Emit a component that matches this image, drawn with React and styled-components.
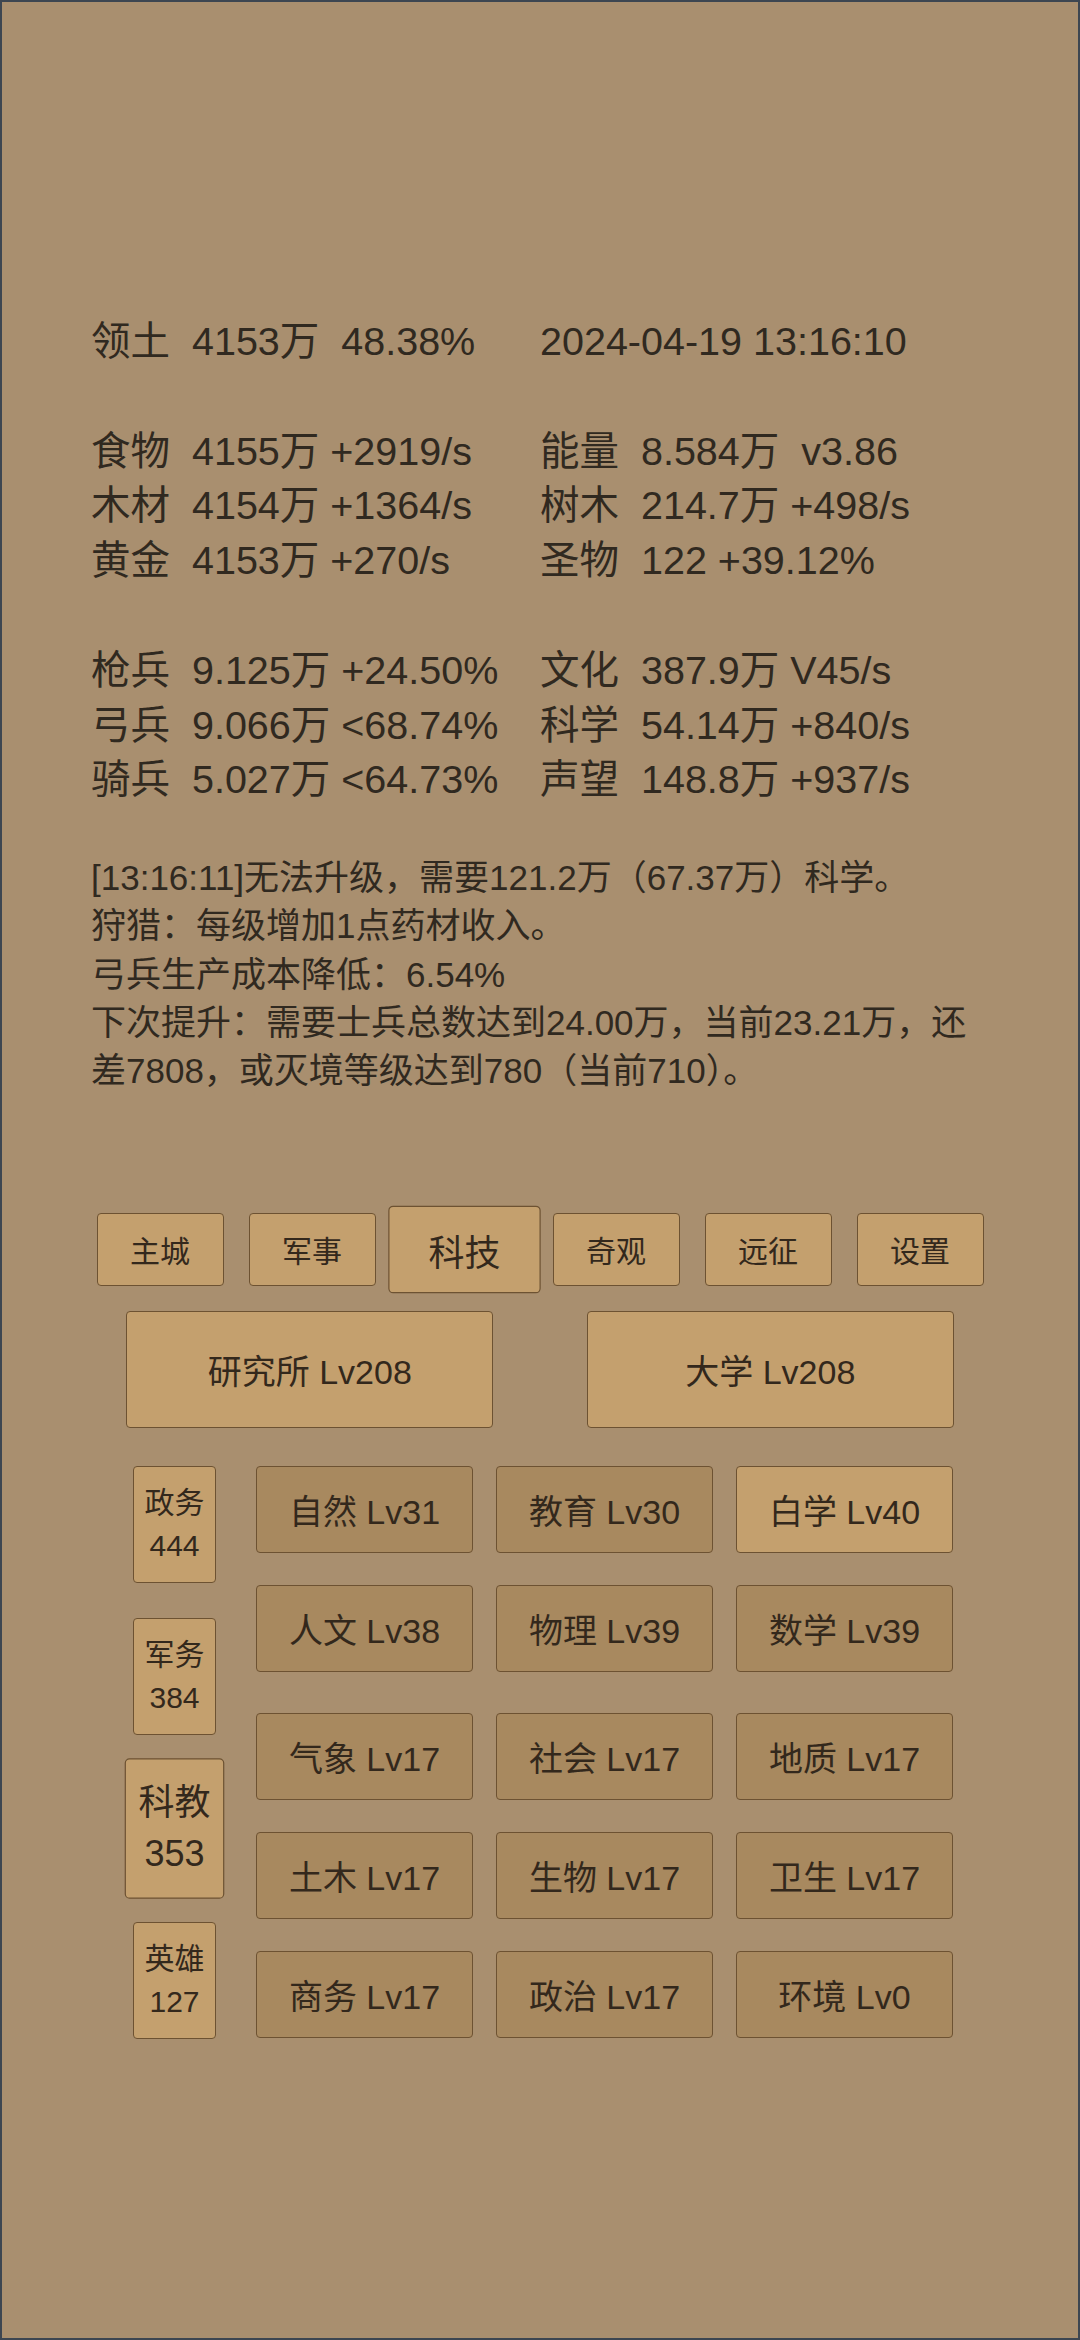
import { Fragment } from "react";
import styled, { createGlobalStyle } from "styled-components";

const GlobalStyle = createGlobalStyle`
  html, body {
    margin: 0;
    padding: 0;
    background: #3d4651;
  }
  * {
    box-sizing: border-box;
  }
`;

const font = `"Liberation Sans", "Noto Sans CJK SC", sans-serif`;

const Page = styled.div`
  width: 1080px;
  height: 2340px;
  border: 2px solid #3d4651;
  background: #a98f6f;
  padding-top: 312px;
  font-family: ${font};
  color: #302920;
  overflow: hidden;
`;

const Stats = styled.div`
  padding: 0 89px;
  display: grid;
  grid-template-columns: 449px 1fr;
  font-size: 39.5px;
  line-height: 54.8px;
`;

const Cell = styled.div`
  white-space: pre;
  margin-top: ${(p) => (p.$gap ? "54.8px" : "0")};
`;

const Log = styled.div`
  margin-top: 47px;
  padding: 0 89px;
  font-size: 35px;
  line-height: 48.3px;
`;

const Tabs = styled.div`
  margin-top: 117px;
  display: flex;
  justify-content: center;
  gap: 25px;
`;

const Btn = styled.div`
  display: flex;
  align-items: center;
  justify-content: center;
  text-align: center;
  background: ${(p) => (p.$dark ? "#a8895f" : "#c4a06e")};
  border: 1.5px solid #6d5232;
  border-radius: 4px;
  color: #33281c;
  transform: ${(p) => (p.$active ? "scale(1.2)" : "none")};
`;

const TabBtn = styled(Btn)`
  width: 127px;
  height: 73px;
  font-size: 30px;
`;

const Buildings = styled.div`
  margin-top: 25px;
  display: flex;
  justify-content: center;
  gap: 93.5px;
`;

const BigBtn = styled(Btn)`
  width: 367px;
  height: 117px;
  font-size: 34px;
`;

const TechArea = styled.div`
  margin-top: 38.7px;
  padding-left: 131px;
  display: flex;
  gap: 40px;
`;

const SideCol = styled.div`
  display: flex;
  flex-direction: column;
  gap: 35px;
`;

const SideBtn = styled(Btn)`
  width: 83px;
  height: 117px;
  font-size: 30px;
  line-height: 42.5px;
  flex-direction: column;
`;

const GridCol = styled.div`
  display: flex;
  flex-direction: column;
  gap: 41px;
`;

const TechGrid = styled.div`
  display: grid;
  grid-template-columns: repeat(3, 217px);
  grid-auto-rows: 87px;
  column-gap: 23px;
  row-gap: 32px;
`;

const TechBtn = styled(Btn)`
  font-size: 34px;
`;

const statRows = [
  ["领土  4153万  48.38%", "2024-04-19 13:16:10"],
  ["食物  4155万 +2919/s", "能量  8.584万  v3.86", true],
  ["木材  4154万 +1364/s", "树木  214.7万 +498/s"],
  ["黄金  4153万 +270/s", "圣物  122 +39.12%"],
  ["枪兵  9.125万 +24.50%", "文化  387.9万 V45/s", true],
  ["弓兵  9.066万 <68.74%", "科学  54.14万 +840/s"],
  ["骑兵  5.027万 <64.73%", "声望  148.8万 +937/s"],
];

const logLines = [
  "[13:16:11]无法升级，需要121.2万（67.37万）科学。",
  "狩猎：每级增加1点药材收入。",
  "弓兵生产成本降低：6.54%",
  "下次提升：需要士兵总数达到24.00万，当前23.21万，还差7808，或灭境等级达到780（当前710）。",
];

const tabs = ["主城", "军事", "科技", "奇观", "远征", "设置"];

const sides = [
  ["政务", "444"],
  ["军务", "384"],
  ["科教", "353", true],
  ["英雄", "127"],
];

const groupA = [
  ["自然 Lv31", true],
  ["教育 Lv30", true],
  ["白学 Lv40", false],
  ["人文 Lv38", true],
  ["物理 Lv39", true],
  ["数学 Lv39", true],
];

const groupB = [
  "气象 Lv17",
  "社会 Lv17",
  "地质 Lv17",
  "土木 Lv17",
  "生物 Lv17",
  "卫生 Lv17",
  "商务 Lv17",
  "政治 Lv17",
  "环境 Lv0",
];

export default function App() {
  return (
    <>
      <GlobalStyle />
      <Page>
        <Stats>
          {statRows.map(([l, r, gap]) => (
            <Fragment key={l}>
              <Cell $gap={gap}>{l}</Cell>
              <Cell $gap={gap}>{r}</Cell>
            </Fragment>
          ))}
        </Stats>

        <Log>
          {logLines.map((t) => (
            <div key={t}>{t}</div>
          ))}
        </Log>

        <Tabs>
          {tabs.map((t) => (
            <TabBtn key={t} $active={t === "科技"}>{t}</TabBtn>
          ))}
        </Tabs>

        <Buildings>
          <BigBtn>研究所 Lv208</BigBtn>
          <BigBtn>大学 Lv208</BigBtn>
        </Buildings>

        <TechArea>
          <SideCol>
            {sides.map(([name, num, active]) => (
              <SideBtn key={name} $active={active}>
                <span>{name}</span>
                <span>{num}</span>
              </SideBtn>
            ))}
          </SideCol>
          <GridCol>
            <TechGrid>
              {groupA.map(([t, dark]) => (
                <TechBtn key={t} $dark={dark}>{t}</TechBtn>
              ))}
            </TechGrid>
            <TechGrid>
              {groupB.map((t) => (
                <TechBtn key={t} $dark>{t}</TechBtn>
              ))}
            </TechGrid>
          </GridCol>
        </TechArea>
      </Page>
    </>
  );
}
